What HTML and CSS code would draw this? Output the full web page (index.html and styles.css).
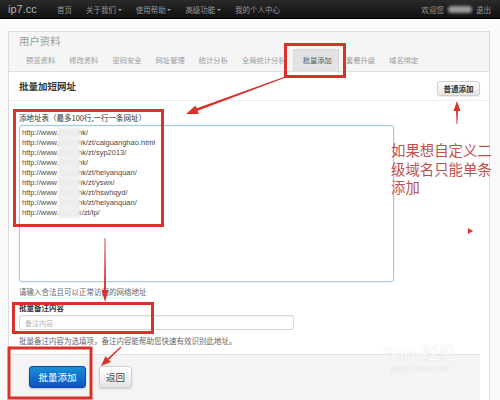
FILE: index.html
```html
<!DOCTYPE html>
<html lang="zh-CN">
<head>
<meta charset="utf-8">
<title>批量添加</title>
<link rel="stylesheet" href="styles.css">
</head>
<body>
<div class="navbar">
  <div class="brand">ip7.cc</div>
  <ul class="nav">
    <li>首页</li>
    <li>关于我们 <span class="caret"></span></li>
    <li>使用帮助 <span class="caret"></span></li>
    <li>高级功能 <span class="caret"></span></li>
    <li>我的个人中心</li>
  </ul>
  <div class="nav-right">欢迎您 <span class="user-mask"></span> 退出</div>
</div>

<div class="wrap">
  <div class="panel">
    <div class="panel-head">
      <div class="panel-title">用户资料</div>
      <ul class="tabs">
        <li>预览资料</li>
        <li>修改资料</li>
        <li>密码安全</li>
        <li>网址管理</li>
        <li>统计分析</li>
        <li>全局统计分析</li>
        <li class="active">批量添加</li>
        <li>套餐升级</li>
        <li>域名绑定</li>
      </ul>
    </div>
    <div class="section-head">
      <h2>批量加短网址</h2>
      <button class="btn btn-small">普通添加</button>
    </div>
    <div class="form">
      <label class="lbl">添地址表（最多100行,一行一条网址）</label>
      <div class="textarea">
        <div class="ln"><span class="pre">http://www.m</span><span class="mask"></span>hk/</div>
        <div class="ln"><span class="pre">http://www.m</span><span class="mask"></span>hk/zt/caiguanghao.html</div>
        <div class="ln"><span class="pre">http://www.r</span><span class="mask"></span>hk/zt/syp2013/</div>
        <div class="ln"><span class="pre">http://www.</span><span class="mask"></span>hk/</div>
        <div class="ln"><span class="pre">http://www</span><span class="mask"></span>hk/zt/heiyanquan/</div>
        <div class="ln"><span class="pre">http://www</span><span class="mask"></span>hk/zt/yswx/</div>
        <div class="ln"><span class="pre">http://www</span><span class="mask"></span>hk/zt/hswhqyd/</div>
        <div class="ln"><span class="pre">http://www</span><span class="mask"></span>hk/zt/heiyanquan/</div>
        <div class="ln"><span class="pre">http://www.r</span><span class="mask"></span>k/zt/lp/</div>
      </div>
      <p class="help">请输入合法且可以正常访问的网络地址</p>
      <label class="lbl bold">批量备注内容</label>
      <input class="input" type="text" placeholder="备注内容">
      <p class="help help2">批量备注内容为选填项，备注内容能帮助您快速有效识别此地址。</p>
    </div>
    <div class="form-actions">
      <button class="btn btn-primary">批量添加</button>
      <button class="btn btn-back">返回</button>
    </div>
  </div>
</div>

<div class="note">如果想自定义二<br>级域名只能单条<br>添加</div>

<div class="watermark">
  <div class="wm-main">Bai<span class="wm-du">du</span>经验</div>
  <div class="wm-sub">jingyan.baidu.com</div>
</div>

<svg class="annot" width="500" height="400" viewBox="0 0 500 400">
  <g fill="none" stroke="#d9322b" stroke-width="3">
    <rect x="285.5" y="44.5" width="59" height="32"/>
    <rect x="14.5" y="110.5" width="148" height="115"/>
    <rect x="13.5" y="303.5" width="139" height="29"/>
    <rect x="9" y="348" width="82" height="50"/>
  </g>
  <g fill="#d9322b">
    <polygon points="288,75.4 288.4,76.6 197,111 196,108.4"/>
    <polygon points="186,114 198.8,114 195.6,105.6"/>
    <polygon points="456.6,124 457.4,124 458,110 456,110"/>
    <polygon points="457,101 453.5,111 460.5,111"/>
    <polygon points="104.6,238 105.4,238 106,291 104,291"/>
    <polygon points="105,302 101.5,290 108.5,290"/>
    <polygon points="120.6,346.6 121.4,347.4 108.9,359.8 107.6,358.4"/>
    <polygon points="101,366 111,362 105.5,356.2"/>
    <polygon points="468,228 473,231 468,234"/>
  </g>
</svg>
</body>
</html>
```
FILE: styles.css
```css
* { box-sizing: border-box; }
html, body { margin: 0; padding: 0; }
body {
  width: 500px;
  height: 400px;
  overflow: hidden;
  position: relative;
  background: #fafafa;
  font-family: "Noto Sans CJK SC", "Liberation Sans", sans-serif;
  color: #333;
}
ul { list-style: none; margin: 0; padding: 0; }

.navbar {
  height: 19px;
  display: flex;
  align-items: center;
  padding-left: 8px;
  background: linear-gradient(#2a2a2a, #101010);
  border-bottom: 1px solid #000;
}
.brand {
  width: 42px;
  font-family: "Liberation Sans", sans-serif;
  font-size: 11px;
  color: #b5b5b5;
}
.nav { display: flex; }
.nav li {
  padding: 0 7px;
  font-size: 7.5px;
  line-height: 19px;
  color: #9a9a9a;
  white-space: nowrap;
}
.caret {
  display: inline-block;
  width: 0; height: 0;
  border-left: 2px solid transparent;
  border-right: 2px solid transparent;
  border-top: 2px solid #9a9a9a;
  vertical-align: middle;
}
.nav-right {
  margin-left: auto;
  padding-right: 9px;
  font-size: 7.5px;
  color: #9a9a9a;
  display: flex;
  align-items: center;
  gap: 4px;
}
.user-mask {
  display: inline-block;
  width: 24px;
  height: 7px;
  border-radius: 4px;
  background: #9a9a9a;
  filter: blur(1.5px);
}

.wrap { padding: 12px 10px 0 8px; }
.panel {
  background: #fff;
  border: 1px solid #dcdcdc;
  border-bottom: none;
  height: 380px;
}
.panel-head {
  background: #f5f5f5;
  border-bottom: 1px solid #dedede;
  padding-left: 10px;
}
.panel-title {
  height: 17px;
  line-height: 17px;
  font-size: 10.4px;
  color: #9a9a9a;
}
.tabs { display: flex; height: 22px; align-items: stretch; }
.tabs li {
  padding: 0 7px;
  font-size: 7.3px;
  line-height: 22px;
  color: #9a9a9a;
  white-space: nowrap;
}
.tabs li.active {
  background: #e3e3e3;
  color: #555;
  border: 1px solid #d8d8d8;
  border-bottom: none;
  padding: 0 6px 0 9px;
  line-height: 21px;
}

.section-head {
  height: 29px;
  display: flex;
  align-items: center;
  justify-content: space-between;
  padding: 0 9px 0 10px;
  border-bottom: 1px solid #eee;
}
.section-head h2 {
  margin: 0;
  font-size: 9.5px;
  font-weight: bold;
  color: #333;
}

.btn {
  font-family: "Noto Sans CJK SC", "Liberation Sans", sans-serif;
  border-radius: 3px;
  padding: 0;
  cursor: pointer;
}
.btn-small {
  width: 43px;
  height: 15px;
  margin-top: 4px;
  font-size: 7.5px;
  font-weight: bold;
  color: #333;
  background: linear-gradient(#ffffff, #e6e6e6);
  border: 1px solid #cfcfcf;
  box-shadow: 0 1px 1px rgba(0,0,0,.08);
}

.form { padding-left: 10px; }
.lbl {
  display: block;
  margin-top: 12px;
  font-size: 7.5px;
  line-height: 10px;
  color: #333;
}
.lbl.bold { margin-top: 6px; font-weight: bold; }
.textarea {
  margin-top: 2px;
  width: 375px;
  height: 157px;
  border: 1px solid #a9cbd9;
  border-radius: 3px;
  box-shadow: 0 0 2px rgba(82,168,236,.35), inset 0 1px 1px rgba(0,0,0,.05);
  padding: 2px 2px;
  font-family: "Liberation Sans", sans-serif;
  font-size: 7.5px;
  line-height: 10px;
  color: #4a4a4a;
}
.ln { white-space: nowrap; display: flex; align-items: center; height: 10px; }
.pre { display: inline-block; width: 38px; white-space: nowrap; }
.mask {
  display: inline-block;
  width: 22px;
  height: 10px;
  margin: 0 -2px 0 -2px;
  background: #ededed;
  filter: blur(1.2px);
  position: relative;
  z-index: 1;
}
.help {
  margin: 5px 0 0;
  font-size: 7.5px;
  line-height: 10px;
  color: #666;
}
.help2 { margin-top: 6px; }
.input {
  display: block;
  margin-top: 2px;
  width: 275px;
  height: 15px;
  border: 1px solid #d6d6d6;
  border-radius: 2px;
  padding: 0 5px;
  font-family: "Noto Sans CJK SC", sans-serif;
  font-size: 7px;
  background: #fff;
  box-shadow: inset 0 1px 1px rgba(0,0,0,.05);
}
.input::placeholder { color: #b5b5b5; }

.form-actions {
  margin: 8px 9px 0 0;
  background: #f4f4f4;
  border-top: 1px solid #e3e3e3;
  height: 60px;
  padding: 11px 0 0 20px;
  display: flex;
  align-items: flex-start;
  gap: 13px;
}
.btn-primary {
  width: 57px;
  height: 22px;
  font-size: 9.5px;
  color: #fff;
  background: linear-gradient(#1a8fd8, #0a52c4);
  border: 1px solid #0a47a8;
  box-shadow: 0 1px 2px rgba(0,0,0,.2);
}
.btn-back {
  width: 33px;
  height: 22px;
  font-size: 9.5px;
  color: #444;
  background: linear-gradient(#ffffff, #e4e4e4);
  border: 1px solid #d0d0d0;
  box-shadow: 0 1px 2px rgba(0,0,0,.15);
}

.note {
  position: absolute;
  left: 391px;
  top: 141px;
  font-size: 14.4px;
  line-height: 18.5px;
  color: #c0504d;
  white-space: nowrap;
}
.watermark {
  position: absolute;
  left: 383px;
  top: 344px;
  color: #fff;
  text-align: center;
  opacity: 0.85;
}
.wm-main {
  font-family: "Liberation Sans", "Noto Sans CJK SC", sans-serif;
  font-size: 17px;
  line-height: 20px;
  text-shadow: 0 0 1px #c4c4c4;
}
.wm-du { font-size: 13px; }
.wm-sub {
  font-family: "Liberation Sans", sans-serif;
  font-size: 6.5px;
  color: #f2f2f2;
  text-shadow: 0 0 1px #cfcfcf;
  letter-spacing: 0.3px;
}
.annot {
  position: absolute;
  left: 0;
  top: 0;
  pointer-events: none;
}
```
